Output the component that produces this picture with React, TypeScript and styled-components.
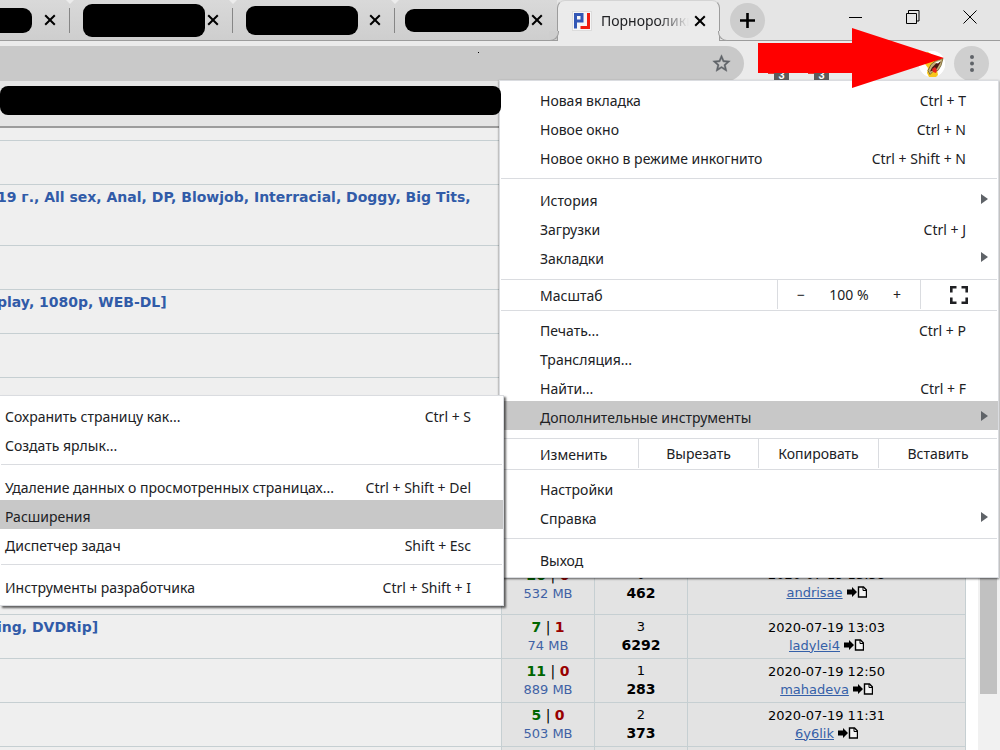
import React from "react";
import styled, { createGlobalStyle, css } from "styled-components";

const GlobalStyle = createGlobalStyle`
  * { box-sizing: border-box; }
  body { margin: 0; background: #fff; }
  button { border: 0; padding: 0; margin: 0; background: none; font: inherit; color: inherit; }
`;

const uiFont = `"Noto Sans", "Open Sans", sans-serif`;
const pageFont = `Verdana, "DejaVu Sans", sans-serif`;

const Browser = styled.div`
  position: relative;
  display: flex;
  flex-direction: column;
  height: 100vh;
  overflow: hidden;
  background: #fff;
  font-family: ${uiFont};
  font-size: 14px;
  color: #202124;
`;

/* ---------- tab strip ---------- */

const TabStrip = styled.header`
  display: flex;
  flex: none;
  height: 41px;
  background: #e5e5e5;
  border-bottom: 1px solid #9c9c9c;
`;

const Tab = styled.div<{ $width: number; $last?: boolean }>`
  position: relative;
  display: flex;
  align-items: center;
  flex: none;
  width: ${(p) => p.$width}px;
  height: 40px;
  padding-right: 13px;
  background: linear-gradient(#d9d9d9, #cecece);
  ${(p) =>
    !p.$last &&
    css`
      &::after {
        content: "";
        position: absolute;
        right: 0;
        top: 8px;
        width: 1px;
        height: 25px;
        background: #868686;
      }
      &::before {
        content: "";
        position: absolute;
        right: -4px;
        top: 0;
        z-index: 1;
        border: 4px solid transparent;
        border-top-color: #ececec;
        border-bottom: 0;
      }
    `}
`;

const Redaction = styled.span<{ $width: number; $height: number; $left?: number }>`
  flex: none;
  width: ${(p) => p.$width}px;
  height: ${(p) => p.$height}px;
  margin-left: ${(p) => p.$left ?? 0}px;
  border-radius: ${(p) => (p.$left ? "9px" : "0 9px 9px 0")};
  background: #000;
`;

const TabClose = styled.button`
  display: flex;
  flex: none;
  align-items: center;
  justify-content: center;
  width: 14px;
  height: 16px;
  margin-left: auto;
`;

const ActiveTab = styled.div`
  position: relative;
  z-index: 2;
  display: flex;
  align-items: center;
  flex: none;
  width: 163px;
  height: 41px;
  padding: 0 12px 0 14px;
  background: #ebebeb;
  border: 1px solid #9c9c9c;
  border-top-color: #d4d4d4;
  border-bottom: 0;
  border-radius: 8px 8px 0 0;
  &::before,
  &::after {
    content: "";
    position: absolute;
    bottom: 0;
    width: 9px;
    height: 9px;
    border-bottom: 1px solid #9c9c9c;
  }
  &::before {
    left: -9px;
    border-right: 1px solid #9c9c9c;
    border-bottom-right-radius: 9px;
    background: #cecece;
  }
  &::after {
    right: -9px;
    border-left: 1px solid #9c9c9c;
    border-bottom-left-radius: 9px;
    background: #e5e5e5;
  }
`;

const TabTitle = styled.span`
  flex: 1;
  min-width: 0;
  margin-left: 9px;
  margin-right: 4px;
  overflow: hidden;
  white-space: nowrap;
  line-height: 20px;
  mask-image: linear-gradient(to right, #000 65%, transparent 100%);
`;

const NewTab = styled.button`
  display: flex;
  align-items: center;
  justify-content: center;
  flex: none;
  width: 35px;
  height: 35px;
  margin: 3px 0 0 10px;
  border-radius: 50%;
  background: #cdcdcd;
`;

const WindowControls = styled.div`
  display: flex;
  margin-left: auto;
  height: 34px;
  padding-right: 2px;
`;

const WindowButton = styled.button`
  display: flex;
  align-items: center;
  justify-content: center;
  width: 57px;
`;

/* ---------- toolbar ---------- */

const Toolbar = styled.div`
  display: flex;
  flex: none;
  height: 40px;
  padding: 5px 11px 0 0;
  background: #ebebeb;
`;

const Omnibox = styled.div`
  position: relative;
  display: flex;
  flex: 1;
  align-items: center;
  justify-content: flex-end;
  height: 35px;
  padding-right: 12px;
  border-radius: 0 18px 18px 0;
  background: #c9c9c9;
  &::after {
    content: "";
    position: absolute;
    right: 265px;
    top: 6px;
    width: 1px;
    height: 1px;
    background: #000;
  }
`;

const Extensions = styled.div`
  display: flex;
  align-items: flex-end;
  width: 175px;
  padding-left: 24px;
`;

const Extension = styled.div`
  display: flex;
  align-items: flex-end;
  width: 40px;
`;

const RedMark = styled.i`
  width: 6px;
  height: 8px;
  border-top: 1px solid #e43b2f;
`;

const Badge = styled.span`
  width: 15px;
  height: 12px;
  background: #5b5b5b;
  color: #fff;
  font: bold 11px/12px "Liberation Sans", sans-serif;
  text-align: center;
`;

const RoundButton = styled.button<{ $bg: string; $size: number }>`
  display: flex;
  align-items: center;
  justify-content: center;
  flex: none;
  align-self: center;
  width: ${(p) => p.$size}px;
  height: ${(p) => p.$size}px;
  border-radius: 50%;
  background: ${(p) => p.$bg};
  & + & {
    margin-left: 9px;
  }
`;

/* ---------- page ---------- */

const Page = styled.main`
  display: flex;
  flex: 1;
  min-height: 0;
  font-family: ${pageFont};
  font-size: 13px;
  color: #000;
`;

const Listing = styled.div`
  flex: 1;
  min-width: 0;
`;

const ListingHeader = styled.div`
  height: 47px;
  padding-top: 5px;
  background: #e5e5e5;
  border-bottom: 2px solid #9c9c9c;
`;

const HeaderRedaction = styled.div`
  position: relative;
  z-index: 5;
  width: calc(52% - 1px);
  height: 29px;
  border-radius: 8px;
  background: #000;
`;

const Table = styled.table`
  width: 100%;
  table-layout: fixed;
  border-collapse: separate;
  border-spacing: 0;
`;

const Row = styled.tr<{ $height: number }>`
  height: ${(p) => p.$height}px;
`;

const Cell = styled.td`
  padding: 0;
  border: solid #c6cfd2;
  border-width: 0 1px 1px 0;
  background: #e3e3e3;
  text-align: center;
  line-height: 18px;
  white-space: nowrap;
`;

const TitleCell = styled(Cell)`
  padding-top: 3px;
  background: #efefef;
  text-align: left;
  text-indent: -3px;
  vertical-align: top;
  overflow: hidden;
`;

const TitleLink = styled.a`
  color: #315ba8;
  font-size: 14px;
  font-weight: bold;
  text-decoration: none;
`;

const Peers = styled.span`
  font-size: 14px;
`;

const Count = styled.b<{ $color: string }>`
  color: ${(p) => p.$color};
`;

const SizeLink = styled.a`
  color: #3f62a5;
  text-decoration: none;
`;

const Downloads = styled.b`
  font-size: 14px;
`;

const UserLink = styled.a`
  color: #3560a8;
`;

const LastPost = styled.svg`
  margin-left: 4px;
  vertical-align: -1px;
`;

const ScrollTrack = styled.div`
  flex: none;
  width: 22px;
  margin-left: 12px;
  padding: 0 3px 0 2px;
  background: #f1f1f1;
`;

const ScrollThumb = styled.div`
  height: 613px;
  background: #c1c1c1;
`;

/* ---------- menus ---------- */

const menuBox = css`
  position: absolute;
  background: #fff;
  border: 1px solid #dadce0;
  font-size: 14px;
`;

const Menu = styled.nav`
  ${menuBox}
  z-index: 4;
  top: 80px;
  right: 1px;
  width: 500px;
  padding: 3px 0 4px;
  box-shadow: 0 1px 2px rgba(0, 0, 0, 0.6);
`;

const SubMenu = styled.nav`
  ${menuBox}
  z-index: 6;
  top: 395px;
  right: 496px;
  left: 0;
  padding: 4px 0 5px;
  border-left: 0;
  box-shadow: 2px 2px 2px rgba(0, 0, 0, 0.6);
`;

const itemText = css`
  padding-top: 4px;
  line-height: 25px;
  white-space: nowrap;
`;

const Item = styled.button<{ $active?: boolean; $sub?: boolean }>`
  ${itemText}
  position: relative;
  display: flex;
  justify-content: space-between;
  width: 100%;
  height: 29px;
  padding-left: ${(p) => (p.$sub ? 5 : 40)}px;
  padding-right: 32px;
  background: ${(p) => (p.$active ? "#c8c8c8" : "transparent")};
  text-align: left;
`;

const Chevron = styled.svg`
  position: absolute;
  right: 10px;
  top: 10px;
`;

const Separator = styled.hr<{ $sub?: boolean }>`
  height: 1px;
  margin: ${(p) => (p.$sub ? "6px 1px" : "7px 1px 5px")};
  border: 0;
  background: #dadce0;
`;

const SplitRow = styled.div`
  display: flex;
  height: 32px;
  margin: 8px 1px 3px;
  border: solid #dadce0;
  border-width: 1px 0;
`;

const SplitLabel = styled.span`
  flex: 1;
  padding-left: 39px;
  line-height: 31px;
`;

const SplitCell = styled.div<{ $width: number }>`
  display: flex;
  align-items: center;
  justify-content: center;
  width: ${(p) => p.$width}px;
  height: 29px;
  border-left: 1px solid #dadce0;
`;

const SplitButton = styled(SplitCell).attrs({ as: "button" })``;

const ZoomButton = styled.button`
  width: 46px;
  line-height: 28px;
`;

const ZoomValue = styled.span`
  flex: 1;
  text-align: center;
`;

const Pointer = styled.svg`
  position: absolute;
  z-index: 8;
  top: 28px;
  right: 56px;
`;

const CloseIcon = () => (
  <svg width="12" height="12" viewBox="0 0 12 12" stroke="#000" strokeWidth="2">
    <path d="M1.2 1.2l9.6 9.6M10.8 1.2l-9.6 9.6" />
  </svg>
);

const Favicon = () => (
  <svg width="20" height="20" viewBox="0 0 20 20" fill="none">
    <rect x="0.5" y="0.5" width="19" height="19" fill="#f6f6f6" stroke="#dcdcdc" />
    <path d="M3.5 17.5V3.5H10V10H5" stroke="#3357b5" strokeWidth="3" />
    <path d="M16.5 2v14.5H8.5" stroke="#f01d10" strokeWidth="3" />
  </svg>
);

const Avatar = () => (
  <svg width="26" height="26" viewBox="0 0 26 26">
    <circle cx="13" cy="13" r="13" fill="#fff" />
    <path d="M4 3l5-2 6 4 9 3-2 5-4 6 1 5-3 3-6-1-2-4 1-5-3-4z" fill="#f7c61d" />
    <path d="M24 7.500l-7 2-5 4-3 6 2 4 3-3 5-1 3-5z" fill="#c3b078" stroke="#6d5d2c" strokeWidth="0.8" />
    <path d="M22 10.500l-5 2-4 4-2 4 3-1 4-2z" fill="#4a1713" />
    <path d="M13 18l3-2 2 3-1 3-3-1z" fill="#e8231b" />
    <path d="M16 11.500l6-2-3 3z" fill="#fff" />
  </svg>
);

const Triangle = () => (
  <Chevron width="7" height="10" viewBox="0 0 7 10" fill="#5f6368">
    <path d="M0 0l7 5-7 5z" />
  </Chevron>
);

type ItemProps = { label: string; keys?: string; arrow?: boolean; active?: boolean; sub?: boolean };

const MenuItem = ({ label, keys, arrow, active, sub }: ItemProps) => (
  <Item type="button" $active={active} $sub={sub}>
    <span>{label}</span>
    {keys && <span>{keys}</span>}
    {arrow && <Triangle />}
  </Item>
);

type Torrent = {
  height: number;
  title?: string;
  seeds?: number;
  leeches?: number;
  size?: string;
  replies?: number;
  downloads?: number;
  date?: string;
  user?: string;
};

const torrents: Torrent[] = [
  { height: 13 },
  { height: 44 },
  { height: 61, title: "19 г., All sex, Anal, DP, Blowjob, Interracial, Doggy, Big Tits," },
  { height: 44 },
  { height: 44, title: "play, 1080p, WEB-DL]" },
  { height: 44 },
  { height: 44 },
  { height: 44 },
  { height: 44 },
  { height: 44 },
  { height: 61, seeds: 20, leeches: 0, size: "532 MB", replies: 0, downloads: 462, date: "2020-07-19 13:58", user: "andrisae" },
  { height: 44, title: "ing, DVDRip]", seeds: 7, leeches: 1, size: "74 MB", replies: 3, downloads: 6292, date: "2020-07-19 13:03", user: "ladylei4" },
  { height: 44, seeds: 11, leeches: 0, size: "889 MB", replies: 1, downloads: 283, date: "2020-07-19 12:50", user: "mahadeva" },
  { height: 44, seeds: 5, leeches: 0, size: "503 MB", replies: 2, downloads: 373, date: "2020-07-19 11:31", user: "6y6lik" },
  { height: 44 },
];

const TorrentRow = ({ t }: { t: Torrent }) => (
  <Row $height={t.height}>
    <TitleCell>{t.title && <TitleLink href="#">{t.title}</TitleLink>}</TitleCell>
    <Cell>
      {t.user && (
        <>
          <Peers>
            <Count $color="#006600">{t.seeds}</Count> | <Count $color="#990000">{t.leeches}</Count>
          </Peers>
          <br />
          <SizeLink href="#">{t.size}</SizeLink>
        </>
      )}
    </Cell>
    <Cell>
      {t.user && (
        <>
          {t.replies}
          <br />
          <Downloads>{t.downloads}</Downloads>
        </>
      )}
    </Cell>
    <Cell>
      {t.user && (
        <>
          {t.date}
          <br />
          <UserLink href="#">{t.user}</UserLink>
          <LastPost width="20" height="12" viewBox="0 0 20 12">
            <path d="M0 3.500h5V1l5 5-5 5V8.500H0z" fill="#000" />
            <path d="M11.500 1h5l3 3v7h-8z" fill="#f4f4f4" stroke="#000" strokeWidth="1.4" />
            <path d="M16 1v3.500h3.500" fill="none" stroke="#000" />
          </LastPost>
        </>
      )}
    </Cell>
  </Row>
);

export default function App() {
  return (
    <Browser>
      <GlobalStyle />
      <TabStrip>
        <Tab $width={70}>
          <Redaction $width={32} $height={25} />
          <TabClose aria-label="Закрыть"><CloseIcon /></TabClose>
        </Tab>
        <Tab $width={163}>
          <Redaction $width={122} $height={33} $left={13} />
          <TabClose aria-label="Закрыть"><CloseIcon /></TabClose>
        </Tab>
        <Tab $width={162}>
          <Redaction $width={112} $height={29} $left={13} />
          <TabClose aria-label="Закрыть"><CloseIcon /></TabClose>
        </Tab>
        <Tab $width={162} $last>
          <Redaction $width={124} $height={23} $left={10} />
          <TabClose aria-label="Закрыть"><CloseIcon /></TabClose>
        </Tab>
        <ActiveTab>
          <Favicon />
          <TabTitle>Порноролики</TabTitle>
          <TabClose aria-label="Закрыть"><CloseIcon /></TabClose>
        </ActiveTab>
        <NewTab aria-label="Новая вкладка">
          <svg width="15" height="15" viewBox="0 0 15 15" stroke="#000" strokeWidth="2.6">
            <path d="M7.5 0v15M0 7.5h15" />
          </svg>
        </NewTab>
        <WindowControls>
          <WindowButton aria-label="Свернуть">
            <svg width="13" height="13" stroke="#000"><path d="M0 6.5h13" /></svg>
          </WindowButton>
          <WindowButton aria-label="Развернуть">
            <svg width="14" height="14" fill="none" stroke="#000">
              <path d="M0.5 3.5h10v10h-10zM2.5 3V0.5h10.500v10.500H11" />
            </svg>
          </WindowButton>
          <WindowButton aria-label="Закрыть окно">
            <svg width="14" height="14" stroke="#000"><path d="M0.5 0.5l13 13M13.5 0.5l-13 13" /></svg>
          </WindowButton>
        </WindowControls>
      </TabStrip>

      <Toolbar>
        <Omnibox>
          <svg width="21" height="21" viewBox="0 0 24 24" fill="#5f6368" stroke="#5f6368" strokeWidth="0.5">
            <path d="M22 9.24l-7.19-.62L12 2 9.19 8.63 2 9.24l5.46 4.73L5.82 21 12 17.27 18.18 21l-1.63-7.03L22 9.24zM12 15.4l-3.76 2.27 1-4.28-3.32-2.88 4.38-.38L12 6.1l1.71 4.04 4.38.38-3.32 2.88 1 4.28L12 15.4z" />
          </svg>
        </Omnibox>
        <Extensions>
          <Extension><RedMark /><Badge>3</Badge></Extension>
          <Extension><RedMark /><Badge>3</Badge></Extension>
        </Extensions>
        <RoundButton $size={26} $bg="#fff" aria-label="Профиль"><Avatar /></RoundButton>
        <RoundButton $size={35} $bg="#cfcfcf" aria-label="Меню">
          <svg width="4" height="17" fill="#5f6368">
            <circle cx="2" cy="2" r="2" /><circle cx="2" cy="8.5" r="2" /><circle cx="2" cy="15" r="2" />
          </svg>
        </RoundButton>
      </Toolbar>

      <Page>
        <Listing>
          <ListingHeader><HeaderRedaction /></ListingHeader>
          <Table>
            <colgroup>
              <col />
              <col width="93" />
              <col width="93" />
              <col width="278" />
            </colgroup>
            <tbody>
              {torrents.map((t, i) => <TorrentRow key={i} t={t} />)}
            </tbody>
          </Table>
        </Listing>
        <ScrollTrack><ScrollThumb /></ScrollTrack>
      </Page>

      <Menu>
        <MenuItem label="Новая вкладка" keys="Ctrl + T" />
        <MenuItem label="Новое окно" keys="Ctrl + N" />
        <MenuItem label="Новое окно в режиме инкогнито" keys="Ctrl + Shift + N" />
        <Separator />
        <MenuItem label="История" arrow />
        <MenuItem label="Загрузки" keys="Ctrl + J" />
        <MenuItem label="Закладки" arrow />
        <SplitRow>
          <SplitLabel>Масштаб</SplitLabel>
          <SplitCell $width={143}>
            <ZoomButton>−</ZoomButton>
            <ZoomValue>100 %</ZoomValue>
            <ZoomButton>+</ZoomButton>
          </SplitCell>
          <SplitButton $width={77} aria-label="Полный экран">
            <svg width="18" height="18" fill="none" stroke="#202124" strokeWidth="2.6">
              <path d="M1.3 6.5V1.3h5.2M11.5 1.3h5.2v5.2M16.7 11.5v5.2h-5.2M6.5 16.7H1.3v-5.2" />
            </svg>
          </SplitButton>
        </SplitRow>
        <MenuItem label="Печать..." keys="Ctrl + P" />
        <MenuItem label="Трансляция..." />
        <MenuItem label="Найти..." keys="Ctrl + F" />
        <MenuItem label="Дополнительные инструменты" arrow active />
        <SplitRow>
          <SplitLabel>Изменить</SplitLabel>
          <SplitButton $width={120}>Вырезать</SplitButton>
          <SplitButton $width={120}>Копировать</SplitButton>
          <SplitButton $width={119}>Вставить</SplitButton>
        </SplitRow>
        <MenuItem label="Настройки" />
        <MenuItem label="Справка" arrow />
        <Separator />
        <MenuItem label="Выход" />
      </Menu>

      <SubMenu>
        <MenuItem sub label="Сохранить страницу как..." keys="Ctrl + S" />
        <MenuItem sub label="Создать ярлык..." />
        <Separator $sub />
        <MenuItem sub label="Удаление данных о просмотренных страницах..." keys="Ctrl + Shift + Del" />
        <MenuItem sub label="Расширения" active />
        <MenuItem sub label="Диспетчер задач" keys="Shift + Esc" />
        <Separator $sub />
        <MenuItem sub label="Инструменты разработчика" keys="Ctrl + Shift + I" />
      </SubMenu>

      <Pointer width="186" height="60" viewBox="0 0 186 60" fill="#f00">
        <path d="M0 15h94V0l92 30-92 30V45H0z" />
      </Pointer>
    </Browser>
  );
}
